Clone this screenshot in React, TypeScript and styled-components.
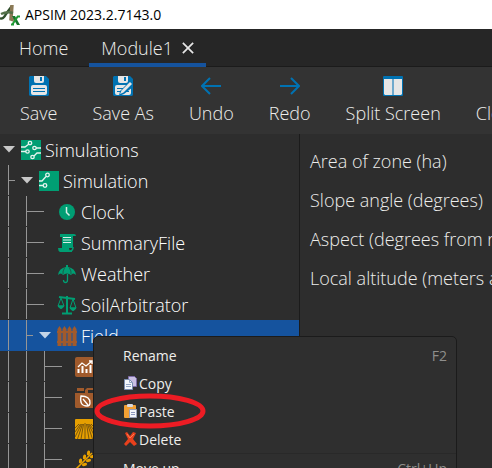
import React from "react";
import styled, { createGlobalStyle, css } from "styled-components";

const GlobalStyle = createGlobalStyle`
  * { box-sizing: border-box; }
  html, body { margin: 0; height: 100%; overflow: hidden; background: #2d2d2d; }
  body { font-family: "Open Sans", "Noto Sans", sans-serif; font-weight: 350; font-size: 18px; color: #eeeeec; }
  button { font: inherit; color: inherit; background: none; border: 0; padding: 0; margin: 0; }
  svg { display: block; flex: none; }
`;

const Window = styled.div`
  display: flex;
  flex-direction: column;
  height: 100vh;
  overflow: hidden;
  white-space: nowrap;
`;

const TitleBar = styled.header`
  flex: none;
  display: flex;
  align-items: center;
  gap: 5px;
  height: 29px;
  background: #ffffff;
  color: #000000;
  font-size: 14px;
  font-weight: 400;
`;

const TabBar = styled.nav`
  flex: none;
  display: flex;
  height: 38px;
  padding-left: 7px;
  background: #262626;
  border-bottom: 1px solid #1b1b1b;
`;

const TabItem = styled.div<{ $active?: boolean }>`
  display: flex;
  align-items: center;
  gap: 9px;
  height: 38px;
  margin-right: 9px;
  padding: 4px 12px 0;
  border-bottom: 4px solid ${(p) => (p.$active ? "#15539e" : "transparent")};
`;

const Toolbar = styled.div`
  flex: none;
  display: flex;
  gap: 35px;
  height: 67px;
  padding: 9px 20px 0;
  background: #333333;
  overflow: hidden;
`;

const ToolButton = styled.button`
  flex: none;
  display: flex;
  flex-direction: column;
  align-items: center;
  gap: 4px;
  line-height: 26px;
  height: 50px;
`;

const Body = styled.main`
  position: relative;
  flex: 1;
  min-height: 0;
  display: grid;
  grid-template-columns: 300px 1fr;
  overflow: hidden;
`;

const Tree = styled.ul`
  margin: 0;
  padding: 0;
  list-style: none;
  overflow: hidden;
  border-right: 1px solid #1b1b1b;
  font-weight: 300;
`;

const TreeRow = styled.li<{ $selected?: boolean }>`
  display: flex;
  align-items: center;
  height: 31px;
  color: #ffffff;
  background: ${(p) => (p.$selected ? "#15539e" : "transparent")};
`;

const line = "linear-gradient(#969696, #969696)";

const Guide = styled.span<{ $branch?: "short" | "long" }>`
  flex: none;
  width: 18px;
  height: 31px;
  background: ${line} 8px 0 / 1px 30px no-repeat
    ${(p) =>
      p.$branch
        ? css`, ${line} 8px 15px / ${p.$branch === "short" ? "7px" : "10px"} 1px no-repeat`
        : ""};
`;

const Expander = styled.span<{ $leaf?: boolean }>`
  flex: none;
  display: flex;
  justify-content: center;
  align-items: center;
  width: 18px;
  height: 31px;
  margin-right: 3px;
  background: ${(p) => (p.$leaf ? `${line} 0 15px / 8px 1px no-repeat` : "none")};
`;

const NodeLabel = styled.span`
  margin-left: 4px;
`;

const Properties = styled.section`
  display: flex;
  flex-direction: column;
  padding: 8px 0 0 10px;
  overflow: hidden;
`;

const PropertyName = styled.div`
  flex: none;
  height: 39px;
  line-height: 39px;
`;

const Menu = styled.div`
  position: absolute;
  left: 93px;
  top: 202px;
  width: 364px;
  padding-top: 4px;
  background: #2f2f2f;
  border: 1px solid #1b1b1b;
  border-radius: 5px;
  font-size: 14px;
  font-weight: 400;
`;

const MenuItem = styled.button`
  position: relative;
  display: flex;
  align-items: center;
  gap: 1px;
  width: 100%;
  height: 28px;
  padding: 0 9px 0 29px;
`;

const Shortcut = styled.span`
  margin-left: auto;
  color: #8e8e8c;
`;

const Separator = styled.hr`
  height: 1px;
  margin: 0;
  border: 0;
  background: #292929;
`;

const Highlight = styled.svg`
  position: absolute;
  left: 0;
  top: -5px;
`;

function Logo() {
  return (
    <svg width="20" height="22" viewBox="0 0 20 22" aria-hidden="true">
      <path d="M0 14q3 2 6-4L12 2" fill="none" stroke="#31502d" strokeWidth="2.500" />
      <path d="M12 1l-1 14 3 1" fill="none" stroke="#8b7956" strokeWidth="3.500" />
      <path d="M1 10q6-3 12-1" fill="none" stroke="#54714a" strokeWidth="2.500" />
      <path d="M12 12h3l5 9h-3z" fill="#15752a" />
      <path d="M18 12l-6 9M11 20.500h3M17 12.500h3" fill="none" stroke="#1f9a35" strokeWidth="2" />
    </svg>
  );
}

function Disk({ pencil }: { pencil?: boolean }) {
  return (
    <svg width="20" height="20" viewBox="0 0 20 20" aria-hidden="true">
      <path d="M1 0h16l3 3v16l-1 1H1l-1-1V1z" fill="#0072b2" />
      <path d="M5 0h10v5q0 2-2 2H7Q5 7 5 5z" fill="#e6e6e6" />
      <path d="M11 1h2v4h-2z" fill="#0072b2" />
      <rect x="2" y="9" width="16" height="10" rx="2" fill="#e6e6e6" />
      <path d="M4 12.500h12M4 15.500h12" stroke="#0072b2" strokeWidth="1" />
      {pencil && (
        <>
          <path d="M6 20l1-5 9-9 4 1v4l-9 7z" fill="#0072b2" />
          <path d="M7 18l1.500-3.500L17 6l2 2-8.500 8.500z" fill="#e6e6e6" />
        </>
      )}
    </svg>
  );
}

function Arrow({ right }: { right?: boolean }) {
  return (
    <svg width="20" height="20" viewBox="0 0 20 20" fill="none" stroke="#0072b2" strokeWidth="2" aria-hidden="true">
      {right ? <path d="M0 10h19M11 2l8 8-8 8" /> : <path d="M20 10H1M9 2l-8 8 8 8" />}
    </svg>
  );
}

function SplitIcon() {
  return (
    <svg width="20" height="20" viewBox="0 0 20 20" aria-hidden="true">
      <rect width="20" height="20" rx="1" fill="#0072b2" />
      <path d="M1 3h18v15l-1 1H2l-1-1z" fill="#e6e6e6" />
      <path d="M10 3v16" stroke="#6fa9cc" strokeWidth="2" />
    </svg>
  );
}

function Triangle({ light }: { light?: boolean }) {
  return (
    <svg width="12" height="7" viewBox="0 0 12 7" aria-hidden="true">
      <path d="M0 0h12L6 6.500z" fill={light ? "#c3d4e8" : "#c8c8c8"} />
    </svg>
  );
}

type IconName =
  | "simulations" | "simulation" | "clock" | "summary" | "weather" | "arbitrator"
  | "field" | "chart" | "fertiliser" | "soil" | "wheat";

const green = "#009e73";
const brown = "#a05a2c";
const gold = "#e69f00";

const drawings: Record<IconName, React.ReactNode> = {
  simulations: (
    <>
      <path d="M0 0h20v20H0z" fill={green} />
      <g fill="none" stroke="#e6f5f0" strokeWidth="1.300">
        <path d="M0 7h4l4-3M0 11.500h5M20 8h-5M20 13h-4l-3 3" />
        <circle cx="9" cy="3" r="1.700" /><circle cx="6.500" cy="11.500" r="1.700" />
        <circle cx="13.500" cy="8" r="1.700" /><circle cx="11.500" cy="17" r="1.700" />
      </g>
    </>
  ),
  simulation: (
    <>
      <path d="M0 0h20v20H0z" fill={green} />
      <g fill="none" stroke="#e6f5f0" strokeWidth="1.300">
        <path d="M0 10h3l4-4.500M0 14.500h4" />
        <circle cx="8.500" cy="4" r="1.800" /><circle cx="6" cy="14.500" r="1.800" />
      </g>
    </>
  ),
  clock: (
    <>
      <circle cx="10" cy="10" r="8" fill={green} />
      <path d="M9.500 5v5.500l3 3" fill="none" stroke="#d8efe8" strokeWidth="1.500" />
    </>
  ),
  summary: (
    <>
      <path d="M3 1h14q2 0 2 2h-3v12H5V4H3z" fill={green} />
      <path d="M1 15h11q0 3 3 3v1H3q-2-1-2-4z" fill={green} />
      <path d="M13 18q3 0 3-4" fill="none" stroke={green} strokeWidth="1.500" />
      <path d="M6 4.500h8M6 7h8M6 9.500h8" stroke="#d8efe8" />
    </>
  ),
  weather: (
    <>
      <path d="M1 11q1-7 8-8V1h2v2q7 1 8 8-3-3-5 0-4-3-8 0-2-3-5 0z" fill={green} />
      <path d="M7.500 4q-2 3-1.500 6M12.500 4q2 3 1.500 6" fill="none" stroke="#2d2d2d" strokeWidth=".6" />
      <path d="M10.500 10v6q0 2.500-2 2.500T6.500 16" fill="none" stroke={green} strokeWidth="1.300" />
    </>
  ),
  arbitrator: (
    <g fill="none" stroke={green}>
      <path d="M2 2l16 2" strokeWidth="1.800" />
      <path d="M10 1v17M5 18.500h10" strokeWidth="2" />
      <path d="M4 3L1 11h6zM16 4l-3 9h6z" strokeWidth="1" />
      <path d="M1 11q3 5 6 0zM13 13q3 5 6 0z" fill={green} />
    </g>
  ),
  field: (
    <g fill={brown}>
      {[0, 5, 10, 15].map((x) => (
        <path key={x} d={`M${x + 0.5} 20V3L${x + 2.5} 0l2 3v17z`} />
      ))}
      <path d="M0 5h20v2H0zM0 15h20v2H0z" />
    </g>
  ),
  chart: (
    <>
      <rect width="20" height="20" rx="2" fill={brown} />
      <path d="M3 10l4-4 4 3 6-5M14 4h3v3" fill="none" stroke="#fff" strokeWidth="1.300" />
      <path d="M3.500 16v-4M7.500 16V9M11.500 16v-4M15.500 16V8" stroke="#fff" strokeWidth="2" />
    </>
  ),
  fertiliser: (
    <>
      <path d="M2 0h7v3H2zM0 5h10V2l2-2h8v2h-7v3h7v14l-1 1H1l-1-1z" fill={brown} />
      <path d="M6 8q9 0 9 7 0 3-3 3Q4 18 6 8zM8 11l5 6" fill="none" stroke="#fff" strokeWidth="1.300" />
    </>
  ),
  soil: (
    <>
      <rect width="20" height="20" rx="1" fill={gold} />
      <path
        d="M10 4v16M8.500 5L6 20M11.500 5L14 20M7.500 5L2.500 20M12.500 5l5 15M6.500 5L0 18M13.500 5L20 18M5.500 5L0 13M14.500 5L20 13M4 5L0 9M16 5l4 4"
        stroke="#5e4410" strokeWidth=".8"
      />
    </>
  ),
  wheat: (
    <>
      <path d="M1 19L17 3" stroke={gold} strokeWidth="1.500" />
      <g fill={gold}>
        {[0, 4, 8].map((d) => (
          <g key={d} transform={`translate(${d} ${-d})`}>
            <ellipse cx="5.500" cy="11" rx="1.600" ry="2.600" transform="rotate(10 5.500 11)" />
            <ellipse cx="9.500" cy="14.500" rx="2.600" ry="1.600" transform="rotate(-10 9.500 14.500)" />
          </g>
        ))}
      </g>
    </>
  ),
};

function NodeIcon({ name }: { name: IconName }) {
  return <svg width="20" height="20" viewBox="0 0 20 20" aria-hidden="true">{drawings[name]}</svg>;
}

function CopyIcon() {
  return (
    <svg width="15" height="16" viewBox="0 0 15 16" aria-hidden="true">
      <path d="M5.500 1.500h6l2 2v8h-8z" fill="#c9bfe4" stroke="#7d6ba8" />
      <path d="M1.500 4.500h5l3 3v7h-8z" fill="#f3f6fb" stroke="#7b8db0" />
      <path d="M6.500 4.500v3h3M3 9.500h5M3 11.500h5" fill="none" stroke="#93a5c4" />
    </svg>
  );
}

function PasteIcon() {
  return (
    <svg width="15" height="16" viewBox="0 0 15 16" aria-hidden="true">
      <rect x="1" y="2" width="12" height="13" rx="1" fill="#f3a033" />
      <rect x="4" y="1" width="6" height="3" rx="1" fill="#d9d9de" />
      <path d="M6.500 6.500h7v8h-7z" fill="#f4f5fa" stroke="#9aa0b8" />
      <path d="M8 9.500h4M8 11.500h4" stroke="#8d97bd" />
    </svg>
  );
}

function DeleteIcon() {
  return (
    <svg width="15" height="16" viewBox="0 0 15 16" aria-hidden="true">
      <path d="M2 2l2-1 3 4 3-4 3 1-3 6 4 5-3 2-4-4-4 4-2-2 4-5z" fill="#e8401c" />
      <path d="M4 3l3 4 4-4" fill="none" stroke="#ff7a55" />
    </svg>
  );
}

interface TreeNode {
  name: string;
  icon: IconName;
  depth: number;
  open?: boolean;
  selected?: boolean;
}

const nodes: TreeNode[] = [
  { name: "Simulations", icon: "simulations", depth: 0, open: true },
  { name: "Simulation", icon: "simulation", depth: 1, open: true },
  { name: "Clock", icon: "clock", depth: 2 },
  { name: "SummaryFile", icon: "summary", depth: 2 },
  { name: "Weather", icon: "weather", depth: 2 },
  { name: "SoilArbitrator", icon: "arbitrator", depth: 2 },
  { name: "Field", icon: "field", depth: 2, open: true, selected: true },
  { name: "", icon: "chart", depth: 3 },
  { name: "", icon: "fertiliser", depth: 3 },
  { name: "", icon: "soil", depth: 3 },
  { name: "", icon: "wheat", depth: 3 },
];

const tools = [
  { label: "Save", icon: <Disk /> },
  { label: "Save As", icon: <Disk pencil /> },
  { label: "Undo", icon: <Arrow /> },
  { label: "Redo", icon: <Arrow right /> },
  { label: "Split Screen", icon: <SplitIcon /> },
  { label: "Clear", icon: null },
];

const properties = [
  "Area of zone (ha)",
  "Slope angle (degrees)",
  "Aspect (degrees from north)",
  "Local altitude (meters above sea level)",
];

export default function App() {
  return (
    <Window>
      <GlobalStyle />
      <TitleBar>
        <Logo />
        <span>APSIM 2023.2.7143.0</span>
      </TitleBar>
      <TabBar>
        <TabItem>
          <button>Home</button>
        </TabItem>
        <TabItem $active>
          <button>Module1</button>
          <button aria-label="Close Module1">
            <svg width="12" height="12" viewBox="0 0 14 14" stroke="#e6e6e6" strokeWidth="2" aria-hidden="true">
              <path d="M1 1l12 12M13 1L1 13" />
            </svg>
          </button>
        </TabItem>
      </TabBar>
      <Toolbar>
        {tools.map((t) => (
          <ToolButton key={t.label}>
            {t.icon ?? <svg width="20" height="20" aria-hidden="true" />}
            {t.label}
          </ToolButton>
        ))}
      </Toolbar>
      <Body>
        <Tree>
          {nodes.map((n) => (
            <TreeRow key={n.icon} $selected={n.selected}>
              {Array.from({ length: n.depth }, (_, i) => (
                <Guide key={i} $branch={i === n.depth - 1 ? (n.open ? "short" : "long") : undefined} />
              ))}
              <Expander $leaf={!n.open}>{n.open && <Triangle light={n.selected} />}</Expander>
              <NodeIcon name={n.icon} />
              <NodeLabel>{n.name}</NodeLabel>
            </TreeRow>
          ))}
        </Tree>
        <Properties>
          {properties.map((p) => (
            <PropertyName key={p}>{p}</PropertyName>
          ))}
        </Properties>
        <Menu>
          <MenuItem>Rename<Shortcut>F2</Shortcut></MenuItem>
          <MenuItem><CopyIcon />Copy</MenuItem>
          <MenuItem>
            <PasteIcon />Paste
            <Highlight width="112" height="38" viewBox="0 0 112 38" aria-hidden="true">
              <ellipse cx="56" cy="19" rx="53" ry="15" fill="none" stroke="#ed1c24" strokeWidth="5" />
            </Highlight>
          </MenuItem>
          <MenuItem><DeleteIcon />Delete</MenuItem>
          <Separator />
          <MenuItem>Move up<Shortcut>Ctrl+Up</Shortcut></MenuItem>
        </Menu>
      </Body>
    </Window>
  );
}
